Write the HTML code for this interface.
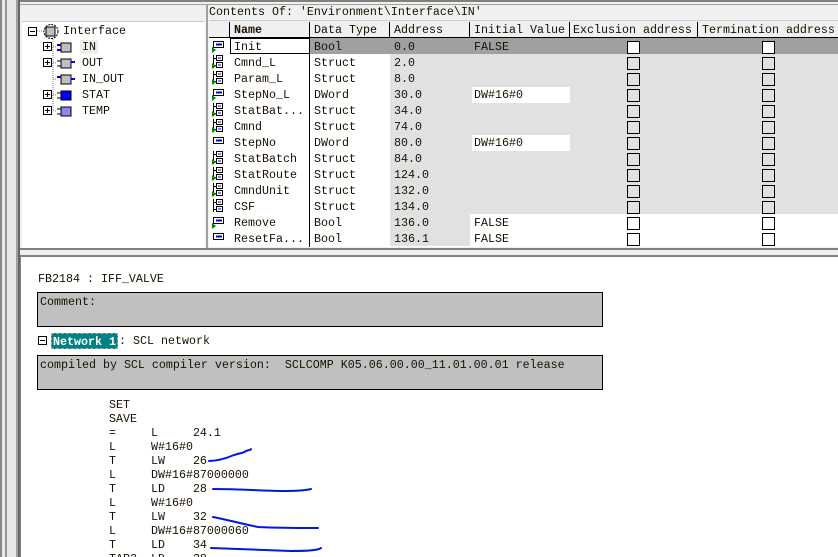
<!DOCTYPE html>
<html style="width:838px;height:557px;overflow:hidden"><head><meta charset="utf-8"><style>
*{margin:0;padding:0;box-sizing:border-box}
body{width:838px;height:557px;overflow:hidden;background:#f0f0f0;font-family:"Liberation Mono",monospace;font-size:11.67px;color:#1a1000;position:relative}
.a{position:absolute;white-space:pre;line-height:14px}
.b{font-weight:bold}
.cb{position:absolute;width:13px;height:13px;border:1px solid #000;background:#fff}
</style></head><body>
<div class="a" style="left:0;top:0;width:20px;height:557px;background:#e8e8e8"></div>
<div class="a" style="left:0;top:0;width:2px;height:557px;background:#888"></div>
<div class="a" style="left:5px;top:0;width:2px;height:557px;background:#999"></div>
<div class="a" style="left:16px;top:0;width:2px;height:557px;background:#a0a0a0"></div>
<div class="a" style="left:18px;top:0;width:2px;height:557px;background:#666"></div>
<div class="a" style="left:20px;top:0;width:818px;height:2px;background:#808080"></div>
<div class="a" style="left:20px;top:4px;width:818px;height:1px;background:#a0a0a0"></div>
<div class="a" style="left:206px;top:5px;width:2px;height:245px;background:#a0a0a0"></div>
<div class="a" style="left:22px;top:21px;width:183px;height:227px;background:#fff;border-top:1px solid #ccc"></div>
<svg class="a" style="left:22px;top:21px" width="183" height="120">
<g fill="none" stroke="#808080" stroke-dasharray="1 1">
<path d="M15 10h6M31 18v72M31 26h4M31 42h4M31 58h4M31 74h4M31 90h4"/>
</g>
<rect x="6.5" y="6.5" width="8" height="8" fill="#fff" stroke="#000"/><path d="M8 10.5h5" stroke="#000"/>
<circle cx="29" cy="10.5" r="7" fill="none" stroke="#000" stroke-dasharray="2 1"/>
<rect x="24" y="6" width="9" height="9" fill="#c0c0c0" stroke="#000"/>
<g stroke="#000"><rect x="21.5" y="21.5" width="8" height="8" fill="#fff"/><path d="M23 25.5h5M25.5 23v5"/>
<rect x="21.5" y="37.5" width="8" height="8" fill="#fff"/><path d="M23 41.5h5M25.5 39v5"/>
<rect x="21.5" y="69.5" width="8" height="8" fill="#fff"/><path d="M23 73.5h5M25.5 71v5"/>
<rect x="21.5" y="85.5" width="8" height="8" fill="#fff"/><path d="M23 89.5h5M25.5 87v5"/></g>
<g><rect x="39" y="22" width="10" height="9" fill="#c0c0c0" stroke="#000"/><rect x="35" y="23" width="4" height="2" fill="#00f"/><rect x="35" y="28" width="4" height="2" fill="#00f"/>
<rect x="39" y="38" width="10" height="9" fill="#c0c0c0" stroke="#000"/><rect x="49" y="40" width="4" height="2" fill="#00f"/><path d="M35 40h4M35 45h4" stroke="#000"/>
<rect x="39" y="54" width="10" height="9" fill="#c0c0c0" stroke="#000"/><rect x="35" y="55" width="4" height="2" fill="#00f"/><rect x="49" y="57" width="4" height="2" fill="#00f"/>
<rect x="39" y="70" width="10" height="9" fill="#00f" stroke="#000"/><path d="M35 72h4M35 77h4" stroke="#000"/>
<rect x="39" y="86" width="10" height="9" fill="#8888ee" stroke="#000"/><path d="M35 88h4M35 93h4" stroke="#000"/></g>
</svg>
<div class="a" style="left:63px;top:24px">Interface</div>
<div class="a" style="left:80px;top:40px;background:#eee;padding:0 2px">IN</div>
<div class="a" style="left:82px;top:56px">OUT</div>
<div class="a" style="left:82px;top:72px">IN_OUT</div>
<div class="a" style="left:82px;top:88px">STAT</div>
<div class="a" style="left:82px;top:104px">TEMP</div>
<div class="a" style="left:209px;top:5px;width:629px;height:16px;border-bottom:1px solid #ccc">Contents Of: 'Environment\Interface\IN'</div>
<div class="a" style="left:209px;top:22px;width:629px;height:225px;background:#fff"></div>
<div class="a" style="left:209px;top:22px;width:629px;height:16px;background:#f0f0f0;border-bottom:1px solid #000"></div>
<div class="a b" style="left:234px;top:23px">Name</div>
<div class="a" style="left:314px;top:23px">Data Type</div>
<div class="a" style="left:394px;top:23px">Address</div>
<div class="a" style="left:474px;top:23px">Initial Value</div>
<div class="a" style="left:573px;top:23px">Exclusion address</div>
<div class="a" style="left:702px;top:23px">Termination address</div>
<div class="a" style="left:229px;top:22px;width:1px;height:16px;background:#000"></div>
<div class="a" style="left:309px;top:22px;width:1px;height:225px;background:#000"></div>
<div class="a" style="left:389px;top:22px;width:1px;height:16px;background:#000"></div>
<div class="a" style="left:469px;top:22px;width:1px;height:16px;background:#000"></div>
<div class="a" style="left:569px;top:22px;width:1px;height:16px;background:#000"></div>
<div class="a" style="left:697px;top:22px;width:1px;height:16px;background:#000"></div>
<div class="a" style="left:390px;top:54px;width:80px;height:192px;background:#e1e1e1"></div>
<div class="a" style="left:470px;top:54px;width:368px;height:160px;background:#e1e1e1"></div>
<div class="a" style="left:472px;top:87px;width:98px;height:16px;background:#fff"></div>
<div class="a" style="left:472px;top:135px;width:98px;height:16px;background:#fff"></div>
<div class="a" style="left:310px;top:38px;width:528px;height:16px;background:#a0a0a0"></div>
<div class="a" style="left:230px;top:38px;width:80px;height:16px;border:1px solid #000;background:#fff"></div>
<svg class="a" style="left:209px;top:38px" width="20" height="208">
<defs>
<g id="s"><rect x="4.5" y="2.5" width="10" height="6" fill="#fff" stroke="#000"/><path d="M7 5.5h6" stroke="#00f" stroke-width="2"/></g>
<g id="t"><path d="M4.5 1v13M4.5 4.5h3M4.5 11.5h3" stroke="#000" fill="none"/><rect x="7.5" y="1.5" width="6" height="5" fill="#fff" stroke="#000"/><rect x="7.5" y="8.5" width="6" height="5" fill="#fff" stroke="#000"/><path d="M9 4h3M9 11h3" stroke="#00f"/></g>
<path id="g" d="M3 9v6l4-3z" fill="#080"/>
</defs>
<use href="#s" y="1"/><use href="#g" y="0"/>
<use href="#t" y="16"/><use href="#g" y="16"/>
<use href="#t" y="32"/><use href="#g" y="32"/>
<use href="#s" y="49"/><use href="#g" y="48"/>
<use href="#t" y="64"/><use href="#g" y="64"/>
<use href="#t" y="80"/><use href="#g" y="80"/>
<use href="#s" y="97"/>
<use href="#t" y="112"/><use href="#g" y="112"/>
<use href="#t" y="128"/><use href="#g" y="128"/>
<use href="#t" y="144"/><use href="#g" y="144"/>
<use href="#t" y="160"/>
<use href="#s" y="177"/><use href="#g" y="176"/>
<use href="#s" y="193"/>
</svg>
<div class="a" style="left:234px;top:39px;line-height:16px">Init
Cmnd_L
Param_L
StepNo_L
StatBat...
Cmnd
StepNo
StatBatch
StatRoute
CmndUnit
CSF
Remove
ResetFa...</div>
<div class="a" style="left:314px;top:39px;line-height:16px">Bool
Struct
Struct
DWord
Struct
Struct
DWord
Struct
Struct
Struct
Struct
Bool
Bool</div>
<div class="a" style="left:394px;top:39px;line-height:16px">0.0
2.0
8.0
30.0
34.0
74.0
80.0
84.0
124.0
132.0
134.0
136.0
136.1</div>
<div class="a" style="left:474px;top:39px;line-height:16px">FALSE


DW#16#0


DW#16#0




FALSE
FALSE</div>
<div class="cb" style="left:627px;top:41px"></div><div class="cb" style="left:762px;top:41px"></div>
<div class="cb" style="left:627px;top:57px;background:none"></div><div class="cb" style="left:762px;top:57px;background:none"></div>
<div class="cb" style="left:627px;top:73px;background:none"></div><div class="cb" style="left:762px;top:73px;background:none"></div>
<div class="cb" style="left:627px;top:89px;background:none"></div><div class="cb" style="left:762px;top:89px;background:none"></div>
<div class="cb" style="left:627px;top:105px;background:none"></div><div class="cb" style="left:762px;top:105px;background:none"></div>
<div class="cb" style="left:627px;top:121px;background:none"></div><div class="cb" style="left:762px;top:121px;background:none"></div>
<div class="cb" style="left:627px;top:137px;background:none"></div><div class="cb" style="left:762px;top:137px;background:none"></div>
<div class="cb" style="left:627px;top:153px;background:none"></div><div class="cb" style="left:762px;top:153px;background:none"></div>
<div class="cb" style="left:627px;top:169px;background:none"></div><div class="cb" style="left:762px;top:169px;background:none"></div>
<div class="cb" style="left:627px;top:185px;background:none"></div><div class="cb" style="left:762px;top:185px;background:none"></div>
<div class="cb" style="left:627px;top:201px;background:none"></div><div class="cb" style="left:762px;top:201px;background:none"></div>
<div class="cb" style="left:627px;top:217px"></div><div class="cb" style="left:762px;top:217px"></div>
<div class="cb" style="left:627px;top:233px"></div><div class="cb" style="left:762px;top:233px"></div>
<div class="a" style="left:20px;top:248px;width:818px;height:2px;background:#808080"></div>
<div class="a" style="left:20px;top:255px;width:818px;height:2px;background:#808080"></div>
<div class="a" style="left:20px;top:257px;width:818px;height:300px;background:#fff;border-left:1px solid #808080;overflow:hidden">
<div class="a" style="left:17px;top:15px">FB2184 : IFF_VALVE</div>
<div class="a" style="left:16px;top:35px;width:566px;height:35px;background:#c0c0c0;border:1px solid #000;padding:2px 2px">Comment:</div>
<div class="a" style="left:17px;top:79px;width:9px;height:9px;border:1px solid #000"></div>
<div class="a" style="left:19px;top:83px;width:5px;height:1px;background:#000"></div>
<div class="a b" style="left:30px;top:76px;width:67px;height:16px;background:#008080;color:#fff;border:1px dashed #aaa;padding:1px 0 0 1px">Network 1</div>
<div class="a" style="left:98px;top:77px">: SCL network</div>
<div class="a" style="left:16px;top:98px;width:566px;height:35px;background:#c0c0c0;border:1px solid #000;padding:2px 2px">compiled by SCL compiler version:  SCLCOMP K05.06.00.00_11.01.00.01 release</div>
<div class="a" style="left:88px;top:141px">SET
SAVE
=     L     24.1
L     W#16#0
T     LW    26
L     DW#16#87000000
T     LD    28
L     W#16#0
T     LW    32
L     DW#16#87000060
T     LD    34
TAR2  LD    38</div>
</div>
<svg class="a" style="left:0;top:0" width="838" height="557">
<g fill="none" stroke="#0018e0" stroke-width="2" stroke-linecap="round">
<path d="M209 461c10 0 18-3 25-6 6-2 10-2 12-4 3-1 5-1 5-2"/>
<path d="M213 489c30 0 50 2 70 2 14 0 24-1 28-2"/>
<path d="M213 517c15 3 30 7 45 10 20 1 40 1 60 1"/>
<path d="M211 548c30 1 60 2 80 3 20 0 28-1 30-3"/>
</g>
</svg>
</body></html>
